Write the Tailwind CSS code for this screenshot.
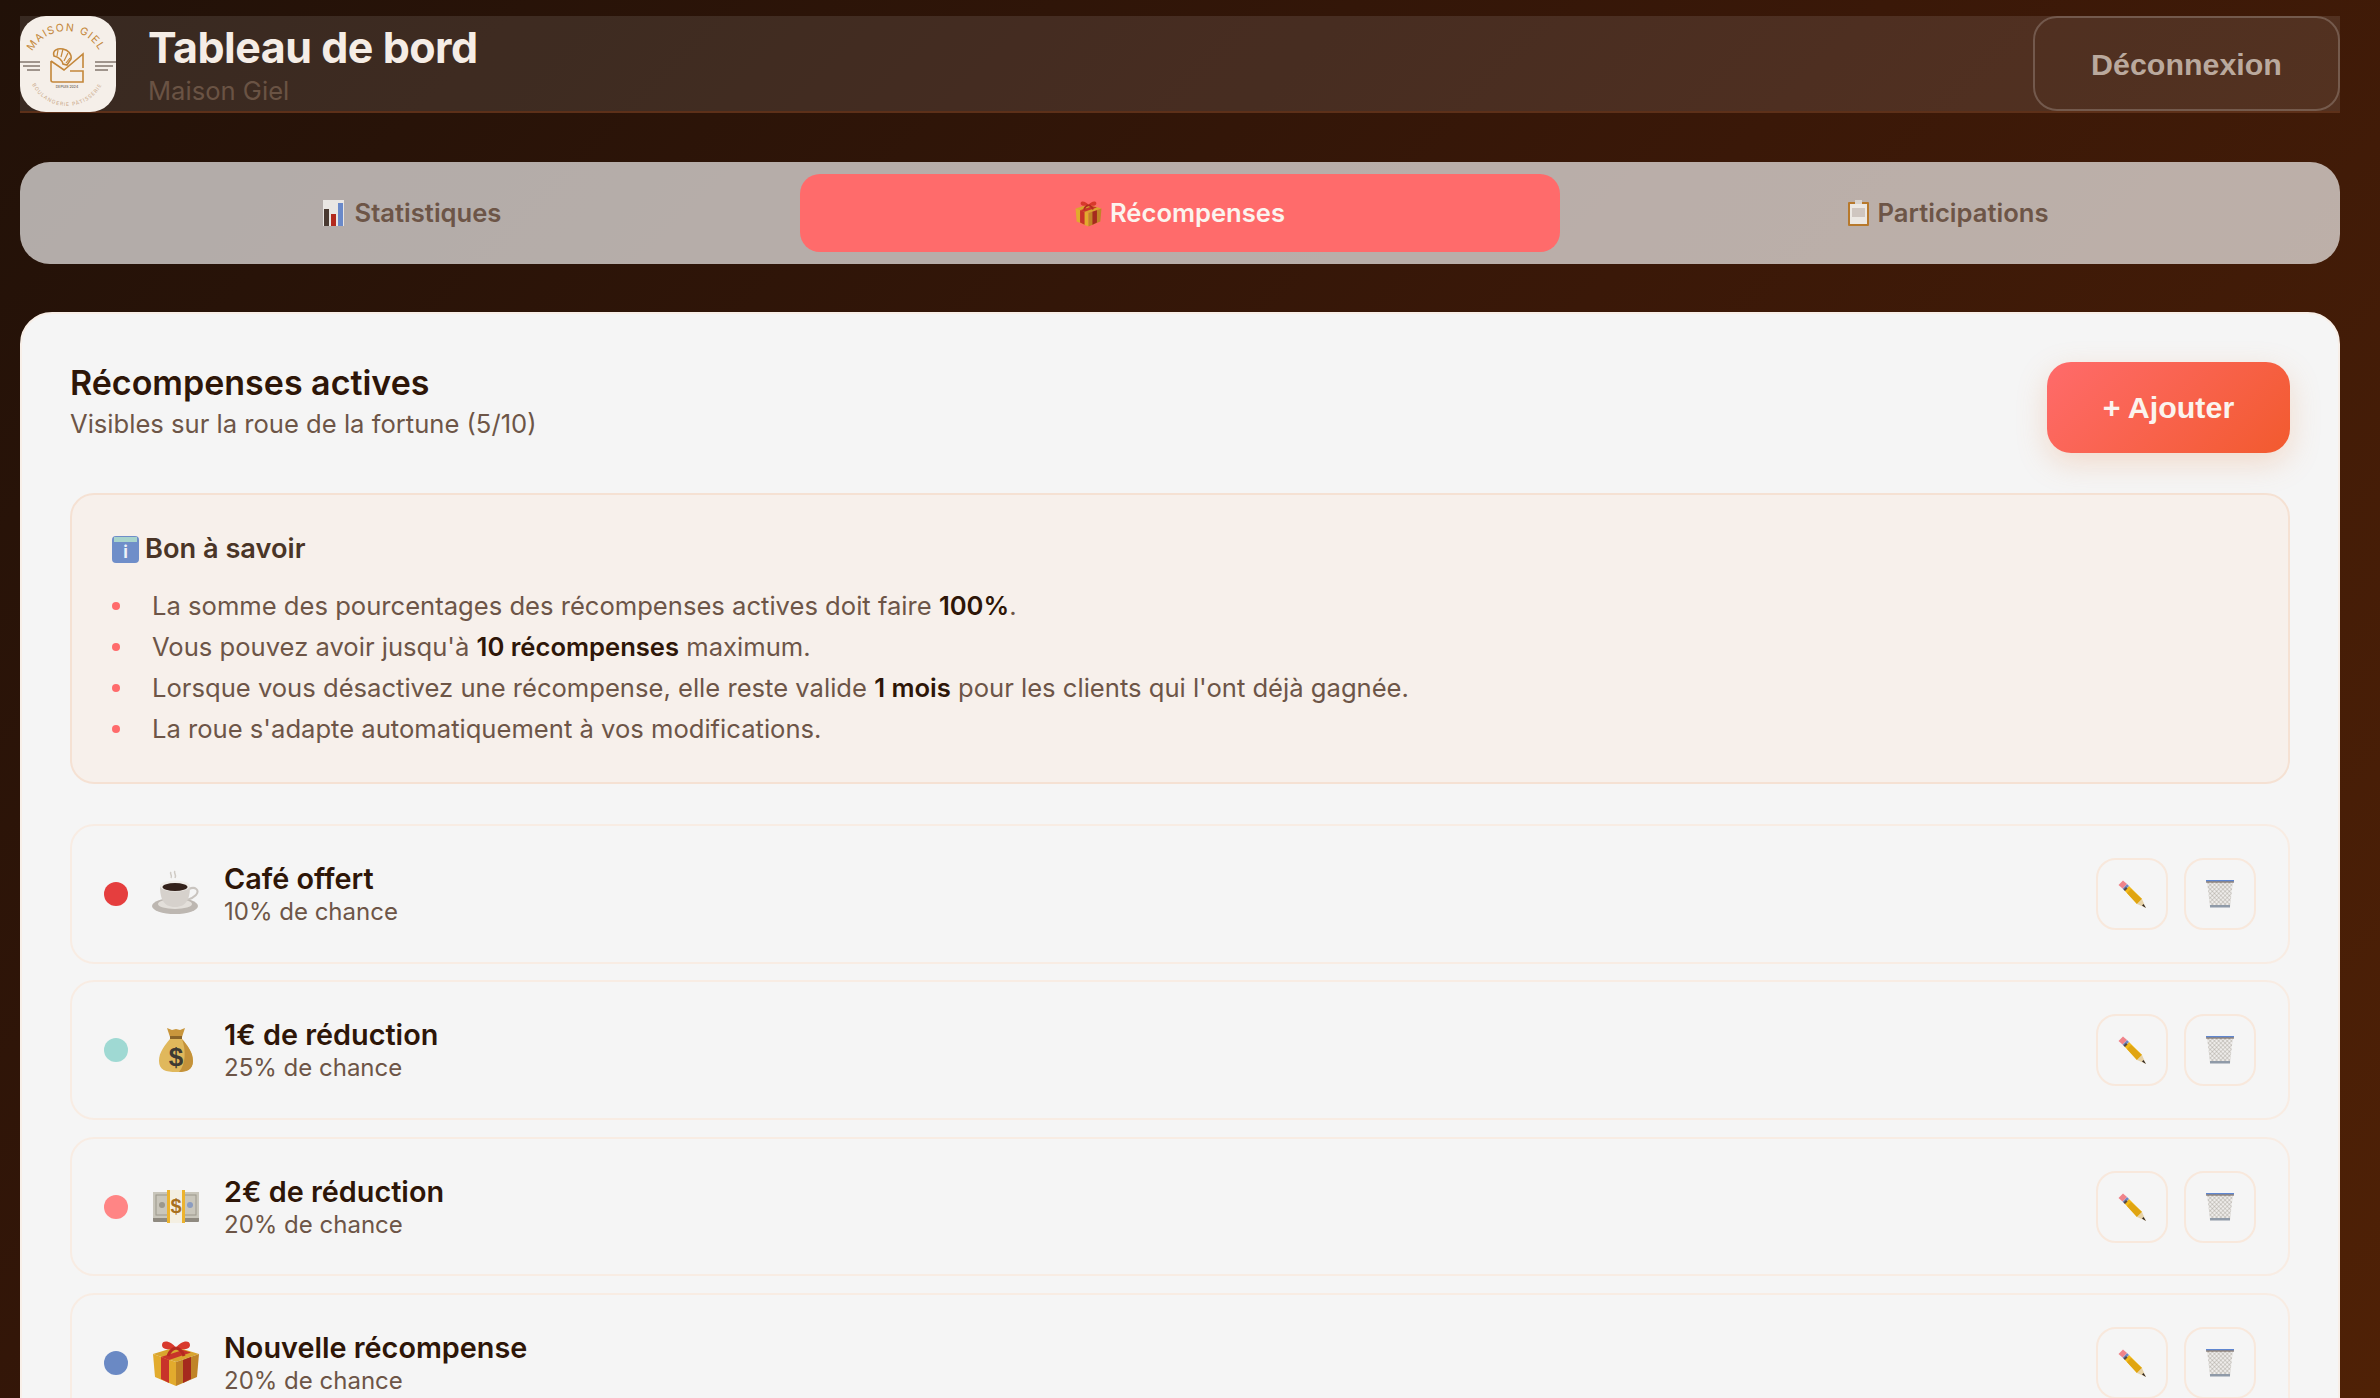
<!DOCTYPE html>
<html lang="fr">
<head>
    <meta charset="UTF-8">
    <title>Tableau de bord - Maison Giel</title>
    <script src="https://cdn.jsdelivr.net/npm/@tailwindcss/browser@4"></script>
</head>
<body class="h-screen overflow-hidden bg-[linear-gradient(135deg,#211108_0%,#3a1808_50%,#4f2106_100%)] pt-4 pr-10 pl-5 font-[Inter,sans-serif]">
    <!-- emoji drawn as svg, no emoji font here -->
    <svg class="absolute h-0 w-0">
        <defs>
            <pattern id="mesh" width="3" height="3" patternUnits="userSpaceOnUse" patternTransform="rotate(45)">
                <rect width="3" height="3" fill="#eeecea"/>
                <path d="M0 0h3M0 0v3" stroke="#96908a" stroke-width="0.700"/>
            </pattern>
        </defs>
        <symbol id="coffee" viewBox="0 0 48 48">
            <path d="M19 2c-2 2 2 3 0 6M23 1c-2 2 2 3 0 7" fill="none" stroke="#cfcac4" stroke-width="1.500"/>
            <ellipse cx="23" cy="36" rx="23" ry="8" fill="#bdb7b1"/>
            <ellipse cx="23" cy="34" rx="17" ry="5" fill="#e3dfda"/>
            <path d="M37 19c6-3 11 1 7 6-2 2-5 4-9 5" fill="none" stroke="#c9c4bf" stroke-width="2"/>
            <path d="M8 16h30c0 12-3 21-15 21S8 28 8 16z" fill="#d6d1cc"/>
            <ellipse cx="23" cy="16" rx="15" ry="5.500" fill="#f0ede9"/>
            <ellipse cx="23" cy="17" rx="12.500" ry="4" fill="#33211a"/>
        </symbol>
        <symbol id="bag" viewBox="0 0 48 48">
            <path d="M15 2l5 2 4-1 4 1 5-2-3 9H18z" fill="#c9963c"/>
            <path d="M18 10h12v3H18z" fill="#8a6428"/>
            <path d="M18 13h12c5 6 11 13 11 22 0 9-7 11-17 11S7 44 7 35c0-9 6-16 11-22z" fill="#e0b85c"/>
            <path d="M30 13c5 6 11 13 11 22 0 9-7 11-14 11 7-8 7-22 3-33z" fill="#c4923a"/>
            <text x="24" y="40" text-anchor="middle" font-family="Liberation Sans" font-size="26" font-weight="700" fill="#3d3a33">$</text>
        </symbol>
        <symbol id="cash" viewBox="0 0 48 48">
            <rect x="1" y="11" width="46" height="28" rx="1" fill="#8f8a80"/>
            <rect x="1" y="9" width="46" height="26" fill="#c9c6bb"/>
            <rect x="4" y="12" width="40" height="20" fill="none" stroke="#9c988c" stroke-width="1"/>
            <circle cx="10" cy="22" r="3" fill="#9c988c"/>
            <circle cx="38" cy="22" r="3" fill="#8b9cc0"/>
            <rect x="15" y="7" width="18" height="33" fill="#f4efe2"/>
            <rect x="15" y="7" width="3" height="33" fill="#ecb32e"/>
            <rect x="30" y="7" width="3" height="33" fill="#ecb32e"/>
            <text x="24" y="30" text-anchor="middle" font-family="Liberation Sans" font-size="20" font-weight="700" fill="#a8701e">$</text>
        </symbol>
        <symbol id="gift" viewBox="0 0 48 48">
            <path d="M1 15l23-7 23 7-23 8z" fill="#d9a52e"/>
            <path d="M1 15l23 8v24L3 38z" fill="#e2ab2d"/>
            <path d="M47 15L24 23v24l21-9z" fill="#c08427"/>
            <path d="M9 18l8 3v23l-8-4z" fill="#c8332a"/>
            <path d="M39 18l-8 3v23l8-4z" fill="#a52a1e"/>
            <path d="M9 18l22-7 8 2.500-22 7.500z" fill="#c8332a"/>
            <path d="M24 9c-4-7-14-9-14-3 0 5 8 5 14 3zM24 9c4-7 14-9 14-3 0 5-8 5-14 3z" fill="#d8392c"/>
            <path d="M24 9c-5 1-7 5-8 8M24 9c5 1 7 5 8 8" stroke="#b52a20" stroke-width="3" fill="none"/>
        </symbol>
        <symbol id="pencil" viewBox="0 0 28 28">
            <path d="M6.500 10.500L11 6l13 13-5 5z" fill="#f2b917"/>
            <path d="M9 13l4-4 11 10-5 5z" fill="#e0a512"/>
            <path d="M19 24l5-5 4 9z" fill="#e6d2a8"/>
            <path d="M25.500 24l2.500 4-4-2.500z" fill="#2b2320"/>
            <path d="M4.500 8.500L9 4l2 2-4.500 4.500z" fill="#6f87c4"/>
            <path d="M5.500 9.500L8 7l1.500 1.500L7 11z" fill="#5a4a42"/>
            <path d="M0.500 5L5 0.500 9 4 4.500 8.500z" fill="#f0838a"/>
        </symbol>
        <symbol id="bin" viewBox="0 0 28 28">
            <path d="M1 1h26l-3 26H4z" fill="url(#mesh)"/>
            <rect x="0" y="0" width="28" height="1.500" fill="#5f86d0"/>
            <rect x="0" y="1.500" width="28" height="1" fill="#6b5a50"/>
            <rect x="4" y="25" width="20" height="2.500" fill="#8f9aa8"/>
        </symbol>
        <symbol id="chart" viewBox="0 0 21 26">
            <rect width="21" height="26" fill="#e9e6e3"/>
            <rect x="1" y="9" width="5" height="17" fill="#4a3a32"/>
            <rect x="8" y="14" width="5" height="12" fill="#b32a1e"/>
            <rect x="15" y="3" width="5" height="23" fill="#6a89c9"/>
        </symbol>
        <symbol id="clipboard" viewBox="0 0 21 26">
            <rect x="0" y="2" width="21" height="24" rx="1" fill="#b7792c"/>
            <rect x="2" y="4" width="17" height="20" fill="#ece8e3"/>
            <rect x="4" y="8" width="13" height="9" fill="#cfc6c0"/>
            <rect x="7" y="0" width="7" height="4" fill="#d9d4cf"/>
        </symbol>
    </svg>

    <header class="flex h-[97px] items-center justify-between border-b-2 border-[#5d3019] bg-white/10">
        <div class="flex items-center gap-8">
            <svg class="h-24 w-24" viewBox="0 0 96 96">
                <rect width="96" height="96" rx="26" fill="#f5efe9"/>
                <path id="logoArc" d="M8 53a38 38 0 0 1 76 0" fill="none"/>
                <text font-family="Inter" font-size="10.500" fill="#c4873a" letter-spacing="1.300"><textPath href="#logoArc" startOffset="50%" text-anchor="middle">MAISON GIEL</textPath></text>
                <path id="logoArcLow" d="M8 51a39 39 0 0 0 78 0" fill="none"/>
                <path d="M0 46h20M3 50h17M7 54h13M75 46h21M75 50h18M75 54h13" stroke="#4a3a30" stroke-width="1"/>
                <path d="M31 45v19a2 2 0 0 0 2 2h30V55H50M31 45l13 9 19-16v14" fill="none" stroke="#c4873a" stroke-width="1.600"/>
                <path d="M34 40c-2-6 4-8 9-7 5 1 9 5 8 10l-4 6-4-1c-1-4-5-7-9-8z" fill="#f5efe9" stroke="#c4873a" stroke-width="1.600"/>
                <path d="M38 34l-1 6M43 33l-2 8M48 37l-4 8M50 42l-4 5" stroke="#c4873a" stroke-width="1.200"/>
                <text x="47" y="72" text-anchor="middle" font-family="Inter" font-size="3.500" fill="#4a3a30">DEPUIS 2024</text>
                <text font-family="Inter" font-size="5" fill="#c9a887" letter-spacing="1"><textPath href="#logoArcLow" startOffset="50%" text-anchor="middle">BOULANGERIE PÂTISSERIE</textPath></text>
            </svg>
            <div class="flex flex-col">
                <h1 class="mt-[2px] text-[43px] leading-[46px] font-bold tracking-[-0.5px] text-[#f5ede6]">Tableau de bord</h1>
                <p class="mt-[6px] text-[25.6px] leading-[30px] text-[#6a5344]">Maison Giel</p>
            </div>
        </div>
        <button class="flex h-[95px] w-[307px] items-center justify-center rounded-[24px] border-2 border-white/20 pt-[2px] font-['Liberation_Sans'] text-[30.4px] font-bold text-[#baa99d]">Déconnexion</button>
    </header>

    <nav class="mt-[49px] grid h-[102px] grid-cols-3 gap-2 rounded-[30px] bg-white/65 p-3">
        <button class="flex items-center justify-center gap-[11px] rounded-[20px] text-[25.6px] font-semibold text-[#6d5547]">
            <svg class="h-[26px] w-[21px]"><use href="#chart"/></svg>Statistiques
        </button>
        <button class="flex items-center justify-center gap-2 rounded-[20px] bg-[#ff6b6b] text-[25.6px] font-semibold text-[#fbf4ee]">
            <svg class="h-[27px] w-[27px]"><use href="#gift"/></svg>Récompenses
        </button>
        <button class="flex items-center justify-center gap-[9px] rounded-[20px] text-[25.6px] font-semibold text-[#6d5547]">
            <svg class="h-[26px] w-[21px]"><use href="#clipboard"/></svg>Participations
        </button>
    </nav>

    <main class="mt-[48px] rounded-[32px] border-2 border-[#f8efe8] bg-[#f5f5f5] px-12 pt-12 pb-12">
        <div class="flex items-start justify-between">
            <div>
                <h2 class="text-[34px] leading-[42px] font-semibold text-[#2e1608]">Récompenses actives</h2>
                <p class="mt-[2px] text-[25.6px] leading-[36px] text-[#6d5547]">Visibles sur la roue de la fortune (5/10)</p>
            </div>
            <button class="h-[91px] w-[243px] rounded-[24px] bg-[linear-gradient(135deg,#ff6b6b,#f25a2e)] font-['Liberation_Sans'] text-[30.4px] font-bold text-[#fbf4ee] shadow-[0_10px_30px_rgba(230,140,80,0.25)]">+ Ajouter</button>
        </div>

        <section class="mt-10 h-[291px] rounded-[24px] border-2 border-[#f5e1d3] bg-[#f7f0eb] px-10 pt-[34px]">
            <h3 class="flex items-center gap-[6px] text-[27.2px] leading-[40px] font-semibold text-[#4a3527]">
                <svg class="h-[27px] w-[27px]" viewBox="0 0 27 27">
                    <rect width="27" height="27" rx="4" fill="#6f8ec9"/>
                    <rect x="2" y="1" width="23" height="5" fill="#a8d4cc"/>
                    <text x="13.500" y="22" text-anchor="middle" font-family="Inter" font-size="17" font-weight="700" fill="#eef2f8">i</text>
                </svg>Bon à savoir
            </h3>
            <ul class="mt-[16px] text-[25.6px] leading-[41px] text-[#6d5547]">
                <li class="flex items-center gap-[32px]"><span class="h-2 w-2 rounded-full bg-[#ff6b6b]"></span><span>La somme des pourcentages des récompenses actives doit faire <strong class="font-semibold text-[#2e1608]">100%</strong>.</span></li>
                <li class="flex items-center gap-[32px]"><span class="h-2 w-2 rounded-full bg-[#ff6b6b]"></span><span>Vous pouvez avoir jusqu'à <strong class="font-semibold text-[#2e1608]">10 récompenses</strong> maximum.</span></li>
                <li class="flex items-center gap-[32px]"><span class="h-2 w-2 rounded-full bg-[#ff6b6b]"></span><span>Lorsque vous désactivez une récompense, elle reste valide <strong class="font-semibold text-[#2e1608]">1 mois</strong> pour les clients qui l'ont déjà gagnée.</span></li>
                <li class="flex items-center gap-[32px]"><span class="h-2 w-2 rounded-full bg-[#ff6b6b]"></span><span>La roue s'adapte automatiquement à vos modifications.</span></li>
            </ul>
        </section>

        <div class="mt-10 flex flex-col gap-[16.8px]">
            <div class="flex h-[139.6px] items-center rounded-[24px] border-2 border-[#f8ece3] pr-8 pl-[32px]">
                <span class="h-6 w-6 rounded-full bg-[#e53e3e]"></span>
                <svg class="mr-[24px] ml-[24px] h-12 w-12"><use href="#coffee"/></svg>
                <div class="flex-1">
                    <p class="text-[28.8px] leading-[34px] font-semibold text-[#2e1608]">Café offert</p>
                    <p class="mt-[2px] text-[24px] leading-[28px] text-[#6d5547]">10% de chance</p>
                </div>
                <div class="flex gap-4">
                    <button class="flex h-[72px] w-[72px] items-center justify-center rounded-[20px] border-2 border-[#f8e8dc]"><svg class="h-7 w-7"><use href="#pencil"/></svg></button>
                    <button class="flex h-[72px] w-[72px] items-center justify-center rounded-[20px] border-2 border-[#f8e8dc]"><svg class="h-7 w-7"><use href="#bin"/></svg></button>
                </div>
            </div>
            <div class="flex h-[139.6px] items-center rounded-[24px] border-2 border-[#f8ece3] pr-8 pl-[32px]">
                <span class="h-6 w-6 rounded-full bg-[#9fd9d3]"></span>
                <svg class="mr-[24px] ml-[24px] h-12 w-12"><use href="#bag"/></svg>
                <div class="flex-1">
                    <p class="text-[28.8px] leading-[34px] font-semibold text-[#2e1608]">1€ de réduction</p>
                    <p class="mt-[2px] text-[24px] leading-[28px] text-[#6d5547]">25% de chance</p>
                </div>
                <div class="flex gap-4">
                    <button class="flex h-[72px] w-[72px] items-center justify-center rounded-[20px] border-2 border-[#f8e8dc]"><svg class="h-7 w-7"><use href="#pencil"/></svg></button>
                    <button class="flex h-[72px] w-[72px] items-center justify-center rounded-[20px] border-2 border-[#f8e8dc]"><svg class="h-7 w-7"><use href="#bin"/></svg></button>
                </div>
            </div>
            <div class="flex h-[139.6px] items-center rounded-[24px] border-2 border-[#f8ece3] pr-8 pl-[32px]">
                <span class="h-6 w-6 rounded-full bg-[#ff8585]"></span>
                <svg class="mr-[24px] ml-[24px] h-12 w-12"><use href="#cash"/></svg>
                <div class="flex-1">
                    <p class="text-[28.8px] leading-[34px] font-semibold text-[#2e1608]">2€ de réduction</p>
                    <p class="mt-[2px] text-[24px] leading-[28px] text-[#6d5547]">20% de chance</p>
                </div>
                <div class="flex gap-4">
                    <button class="flex h-[72px] w-[72px] items-center justify-center rounded-[20px] border-2 border-[#f8e8dc]"><svg class="h-7 w-7"><use href="#pencil"/></svg></button>
                    <button class="flex h-[72px] w-[72px] items-center justify-center rounded-[20px] border-2 border-[#f8e8dc]"><svg class="h-7 w-7"><use href="#bin"/></svg></button>
                </div>
            </div>
            <div class="flex h-[139.6px] items-center rounded-[24px] border-2 border-[#f8ece3] pr-8 pl-[32px]">
                <span class="h-6 w-6 rounded-full bg-[#6a89c4]"></span>
                <svg class="mr-[24px] ml-[24px] h-12 w-12"><use href="#gift"/></svg>
                <div class="flex-1">
                    <p class="text-[28.8px] leading-[34px] font-semibold text-[#2e1608]">Nouvelle récompense</p>
                    <p class="mt-[2px] text-[24px] leading-[28px] text-[#6d5547]">20% de chance</p>
                </div>
                <div class="flex gap-4">
                    <button class="flex h-[72px] w-[72px] items-center justify-center rounded-[20px] border-2 border-[#f8e8dc]"><svg class="h-7 w-7"><use href="#pencil"/></svg></button>
                    <button class="flex h-[72px] w-[72px] items-center justify-center rounded-[20px] border-2 border-[#f8e8dc]"><svg class="h-7 w-7"><use href="#bin"/></svg></button>
                </div>
            </div>
        </div>
    </main>
</body>
</html>
